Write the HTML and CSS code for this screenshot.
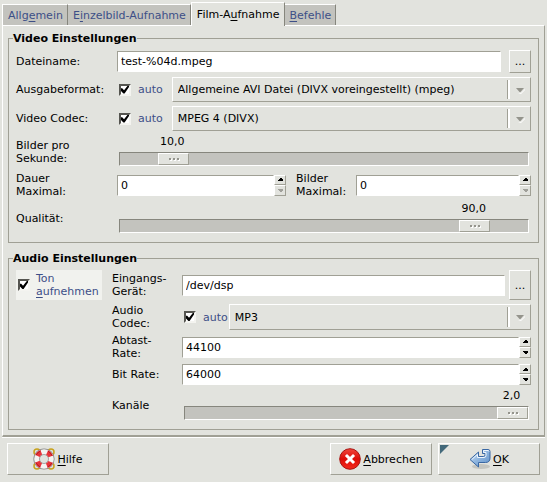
FILE: index.html
```html
<!DOCTYPE html>
<html lang="de">
<head>
<meta charset="utf-8">
<meta name="viewport" content="width=device-width, initial-scale=1">
<title>Einstellungen</title>
<link rel="stylesheet" href="styles.css">
</head>
<body>
<form class="dialog">
  <div class="tabs" role="tablist">
    <button class="tab" type="button" role="tab">Allg<u>e</u>mein</button>
    <button class="tab" type="button" role="tab">E<u>i</u>nzelbild-Aufnahme</button>
    <button class="tab tab-active" type="button" role="tab" aria-selected="true">Film-A<u>u</u>fnahme</button>
    <button class="tab" type="button" role="tab"><u>B</u>efehle</button>
  </div>

  <main class="panel">
    <fieldset class="group">
      <legend>Video Einstellungen</legend>
      <div class="rows video">
        <label for="file">Dateiname:</label>
        <div class="line file-line">
          <input class="field" id="file" type="text" value="test-%04d.mpeg">
          <button class="browse" type="button">...</button>
        </div>

        <label for="format">Ausgabeformat:</label>
        <div class="line spaced">
          <label class="auto"><input class="check" type="checkbox" checked>auto</label>
          <div class="combo">
            <select id="format"><option>Allgemeine AVI Datei (DIVX voreingestellt) (mpeg)</option></select>
            <svg class="drop" viewBox="0 0 9 6"><path class="lite" d="M2 6h3l4-4v-1L5 5z"/><path class="mute" d="M0 0h8L4.500 4h-1z"/></svg>
          </div>
        </div>

        <label for="vcodec">Video Codec:</label>
        <div class="line spaced">
          <label class="auto"><input class="check" type="checkbox" checked>auto</label>
          <div class="combo">
            <select id="vcodec"><option>MPEG 4 (DIVX)</option></select>
            <svg class="drop" viewBox="0 0 9 6"><path class="lite" d="M2 6h3l4-4v-1L5 5z"/><path class="mute" d="M0 0h8L4.500 4h-1z"/></svg>
          </div>
        </div>

        <label for="fps">Bilder pro<br>Sekunde:</label>
        <div class="slider" style="--value: 0.1">
          <output for="fps">10,0</output>
          <input id="fps" type="range" min="0" max="100" value="10">
        </div>

        <label for="duration">Dauer<br>Maximal:</label>
        <div class="pair">
          <div class="spin">
            <input class="field" id="duration" type="text" inputmode="numeric" value="0">
            <div class="steps">
              <button type="button" aria-label="+"><svg viewBox="0 0 5 3"><path d="M2 0h1l2 2v1H0V2z"/></svg></button>
              <button type="button" aria-label="-" disabled><svg viewBox="0 0 5 3"><path d="M0 0h5v1L3 3H2L0 1z"/></svg></button>
            </div>
          </div>
          <label class="frames" for="frames">Bilder<br>Maximal:</label>
          <div class="spin">
            <input class="field" id="frames" type="text" inputmode="numeric" value="0">
            <div class="steps">
              <button type="button" aria-label="+"><svg viewBox="0 0 5 3"><path d="M2 0h1l2 2v1H0V2z"/></svg></button>
              <button type="button" aria-label="-" disabled><svg viewBox="0 0 5 3"><path d="M0 0h5v1L3 3H2L0 1z"/></svg></button>
            </div>
          </div>
        </div>

        <label for="quality">Qualität:</label>
        <div class="slider" style="--value: 0.9">
          <output for="quality">90,0</output>
          <input id="quality" type="range" min="0" max="100" value="90">
        </div>
      </div>
    </fieldset>

    <fieldset class="group">
      <legend>Audio Einstellungen</legend>
      <div class="audio">
        <label class="record"><input class="check" type="checkbox" checked><span>Ton<br><u>a</u>ufnehmen</span></label>
        <div class="rows audio-rows">
          <label for="device">Eingangs-<br>Gerät:</label>
          <div class="line device-line">
            <input class="field" id="device" type="text" value="/dev/dsp">
            <button class="browse" type="button">...</button>
          </div>

          <label for="acodec">Audio<br>Codec:</label>
          <div class="line tight">
            <label class="auto"><input class="check" type="checkbox" checked>auto</label>
            <div class="combo">
              <select id="acodec"><option>MP3</option></select>
              <svg class="drop" viewBox="0 0 9 6"><path class="lite" d="M2 6h3l4-4v-1L5 5z"/><path class="mute" d="M0 0h8L4.500 4h-1z"/></svg>
            </div>
          </div>

          <label for="rate">Abtast-<br>Rate:</label>
          <div class="spin">
            <input class="field" id="rate" type="text" inputmode="numeric" value="44100">
            <div class="steps">
              <button type="button" aria-label="+"><svg viewBox="0 0 5 3"><path d="M2 0h1l2 2v1H0V2z"/></svg></button>
              <button type="button" aria-label="-"><svg viewBox="0 0 5 3"><path d="M0 0h5v1L3 3H2L0 1z"/></svg></button>
            </div>
          </div>

          <label for="bitrate">Bit Rate:</label>
          <div class="spin">
            <input class="field" id="bitrate" type="text" inputmode="numeric" value="64000">
            <div class="steps">
              <button type="button" aria-label="+"><svg viewBox="0 0 5 3"><path d="M2 0h1l2 2v1H0V2z"/></svg></button>
              <button type="button" aria-label="-"><svg viewBox="0 0 5 3"><path d="M0 0h5v1L3 3H2L0 1z"/></svg></button>
            </div>
          </div>

          <label for="channels">Kanäle</label>
          <div class="slider" style="--value: 1">
            <output for="channels">2,0</output>
            <input id="channels" type="range" min="1" max="2" value="2">
          </div>
        </div>
      </div>
    </fieldset>
  </main>

  <footer class="actions">
    <button class="action help" type="button">
      <svg class="icon" viewBox="0 0 22 22">
        <g fill="none" stroke="#c9a21c" stroke-width="1.500"><circle cx="4" cy="4" r="3"/><circle cx="18" cy="4" r="3"/><circle cx="4" cy="18" r="3"/><circle cx="18" cy="18" r="3"/></g>
        <circle cx="11" cy="11" r="7.300" fill="none" stroke="#8a8a88" stroke-width="6.600"/>
        <circle cx="11" cy="11" r="7.300" fill="none" stroke="#f4f4f2" stroke-width="5"/>
        <circle cx="11" cy="11" r="7.300" fill="none" stroke="#e8333a" stroke-width="5" stroke-dasharray="5.400 6.067" stroke-dashoffset="-3.030"/>
        <circle cx="11" cy="11" r="8.800" fill="none" stroke="#b71c20" stroke-width="1" stroke-dasharray="6.500 7.323" stroke-dashoffset="-3.660"/>
      </svg>
      <span><u>H</u>ilfe</span>
    </button>
    <button class="action" type="button">
      <svg class="icon" viewBox="0 0 22 22">
        <defs><linearGradient id="red" x1="0" y1="0" x2="0" y2="1"><stop offset="0" stop-color="#f0473c"/><stop offset="0.500" stop-color="#dc0d08"/><stop offset="1" stop-color="#f42a1d"/></linearGradient></defs>
        <circle cx="11" cy="11" r="10.300" fill="url(#red)" stroke="#a91410"/>
        <path d="M8 8l6 6M14 8l-6 6" stroke="#fff" stroke-width="3" stroke-linecap="square" fill="none"/>
      </svg>
      <span><u>A</u>bbrechen</span>
    </button>
    <button class="action default" type="submit">
      <svg class="icon" viewBox="0 0 22 22">
        <defs><linearGradient id="blue" x1="0" y1="0" x2="1" y2="1"><stop offset="0" stop-color="#d4e5f6"/><stop offset="0.500" stop-color="#8db4de"/><stop offset="1" stop-color="#5f90c8"/></linearGradient></defs>
        <ellipse cx="12" cy="18.500" rx="9" ry="2.500" fill="#c4c5c0"/>
        <path d="M1 11.500L9.500 4v4.500h5q1.500 0 1.500-1.500V5.500h-2.500v-4H19q2 0 2 2V10q0 4.500-4.500 4.500h-7V19z" fill="url(#blue)" stroke="#3967a3" stroke-linejoin="round"/>
        <path d="M2.800 11.500L8.500 6.400v3.100h6.500q2 0 2-2V4.500h-2.500v-2H19q1 0 1 1" fill="none" stroke="#edf5fc" stroke-width="1"/>
      </svg>
      <span><u>O</u>K</span>
    </button>
  </footer>
</form>
</body>
</html>
```

FILE: styles.css
```css
:root {
  --face: #e2e3de;
  --shade: #a0a095;
  --dark: #86867d;
  --trough: #c3c3be;
  --link: #3d4f87;
}

* { box-sizing: border-box; }

body {
  margin: 0;
  background: var(--face);
  color: #000;
}

body, button, input, select {
  font: 11px/13px "DejaVu Sans", sans-serif;
}

button, input, select {
  margin: 0;
  border-radius: 0;
  color: #000;
}

button {
  padding: 0;
  background: var(--face);
  border: 1px solid;
  border-color: #fff var(--shade) var(--shade) #fff;
}

u { text-underline-offset: 2px; }

.dialog { padding: 2px 2px 7px; }

.tabs {
  display: flex;
  align-items: flex-end;
}

.tab {
  height: 21px;
  padding: 0 4px 0 5px;
  background: var(--trough);
  border-color: #fff var(--dark) #fff #fff;
  border-width: 1px 1px 0 0;
  color: var(--link);
}

.tab:first-child { border-left-width: 1px; }

.tab-active {
  position: relative;
  height: 24px;
  margin-bottom: -1px;
  background: var(--face);
  border-left-width: 1px;
  color: #000;
}

.panel {
  display: flex;
  flex-direction: column;
  gap: 9px;
  padding: 6px 5px 5px;
  border: 1px solid;
  border-color: #fff var(--shade) var(--shade) #fff;
  border-bottom-width: 2px;
  box-shadow: 0 1px #fff;
}

.group {
  min-width: 0;
  margin: 0;
  padding: 5px 7px 7px;
  border: 1px solid var(--shade);
}

legend {
  margin-left: -3px;
  padding: 0;
  font-weight: bold;
}

.rows {
  display: grid;
  row-gap: 4px;
  align-items: center;
}

.video { grid-template-columns: 101px minmax(0, 1fr); }

.audio {
  display: grid;
  grid-template-columns: 86px minmax(0, 1fr);
  column-gap: 10px;
  align-items: start;
}

.audio-rows { grid-template-columns: 70px minmax(0, 1fr); }

.line {
  display: flex;
  align-items: center;
}

.file-line { gap: 8px; }
.device-line { gap: 4px; height: 30px; }
.spaced { gap: 9px; }
.tight { gap: 1px; }

.pair {
  display: grid;
  grid-template-columns: 29fr 50px 30fr;
  column-gap: 10px;
  align-items: center;
}

.field {
  flex: 1;
  width: 0;
  min-width: 0;
  height: 21px;
  padding: 0 3px;
  background: #fff;
  border: 1px solid;
  border-color: var(--shade) #fff #fff var(--shade);
}

.browse {
  width: 22px;
  height: 23px;
}

.device-line .browse { height: 30px; }

.auto {
  display: flex;
  align-items: center;
  gap: 7px;
  padding-left: 2px;
  color: var(--link);
}

.record {
  display: flex;
  align-items: center;
  gap: 6px;
  height: 30px;
  padding-left: 2px;
  background: #f1f2ee;
  color: var(--link);
}

.check {
  appearance: none;
  flex: none;
  width: 12px;
  height: 12px;
  background: #fff;
  border: 2px solid;
  border-color: #555550 #f4f4f0 #f4f4f0 #555550;
}

.check:checked::before {
  content: "";
  display: block;
  width: 8px;
  height: 8px;
  background: #000;
  clip-path: polygon(0 35%, 15% 35%, 38% 60%, 85% 0, 100% 0, 100% 20%, 45% 100%, 30% 100%, 0 70%);
}

.combo {
  position: relative;
  display: flex;
  flex: 1;
  min-width: 0;
}

.combo select {
  appearance: none;
  width: 100%;
  height: 25px;
  padding: 0 26px 0 5px;
  background: var(--face);
  border: 1px solid;
  border-color: #fff var(--shade) var(--shade) #fff;
}

.combo::after {
  content: "";
  position: absolute;
  top: 3px;
  bottom: 3px;
  right: 21px;
  width: 2px;
  border-left: 1px solid var(--shade);
  background: #fff;
}

.audio .combo select { height: 26px; }

.drop {
  position: absolute;
  top: 11px;
  right: 6px;
  width: 9px;
  height: 6px;
  pointer-events: none;
}

.lite { fill: #fff; }
.mute { fill: #94948c; }

.spin {
  display: flex;
  flex: 1;
  min-width: 0;
}

.steps {
  display: grid;
  grid-template-rows: 10px 11px;
  width: 12px;
}

.steps button {
  display: flex;
  align-items: center;
  justify-content: center;
}

.steps svg {
  width: 5px;
  height: 3px;
  shape-rendering: crispEdges;
}

.steps button:disabled path { fill: #a0a09a; }

.slider {
  display: flex;
  flex-direction: column;
  gap: 4px;
  padding: 0 2px 2px;
}

.slider output {
  width: 31px;
  margin-left: calc((100% - 33px) * var(--value));
  text-align: center;
}

.slider input {
  appearance: none;
  width: 100%;
  height: 14px;
  background: var(--trough);
  border: 1px solid;
  border-color: var(--dark) #fff #fff var(--dark);
}

.slider input::-webkit-slider-thumb {
  appearance: none;
  width: 31px;
  height: 12px;
  border: 1px solid;
  border-color: #fff var(--shade) var(--shade) #fff;
  background:
    linear-gradient(#94948c, #94948c) 10px 4px / 2px 2px no-repeat,
    linear-gradient(#94948c, #94948c) 14px 4px / 2px 2px no-repeat,
    linear-gradient(#94948c, #94948c) 18px 4px / 2px 2px no-repeat,
    linear-gradient(#fff, #fff) 11px 5px / 2px 2px no-repeat,
    linear-gradient(#fff, #fff) 15px 5px / 2px 2px no-repeat,
    linear-gradient(#fff, #fff) 19px 5px / 2px 2px no-repeat,
    var(--face);
}

.actions {
  display: flex;
  gap: 6px;
  padding: 6px 5px 0;
}

.action {
  position: relative;
  display: flex;
  align-items: center;
  justify-content: center;
  gap: 2px;
  width: 102px;
  height: 32px;
}

.help { margin-right: auto; }

.icon {
  width: 22px;
  height: 22px;
}

.default::before {
  content: "";
  position: absolute;
  top: 1px;
  left: 1px;
  width: 9px;
  height: 9px;
  background: #43697a;
  clip-path: polygon(0 0, 100% 0, 0 100%);
}
```
